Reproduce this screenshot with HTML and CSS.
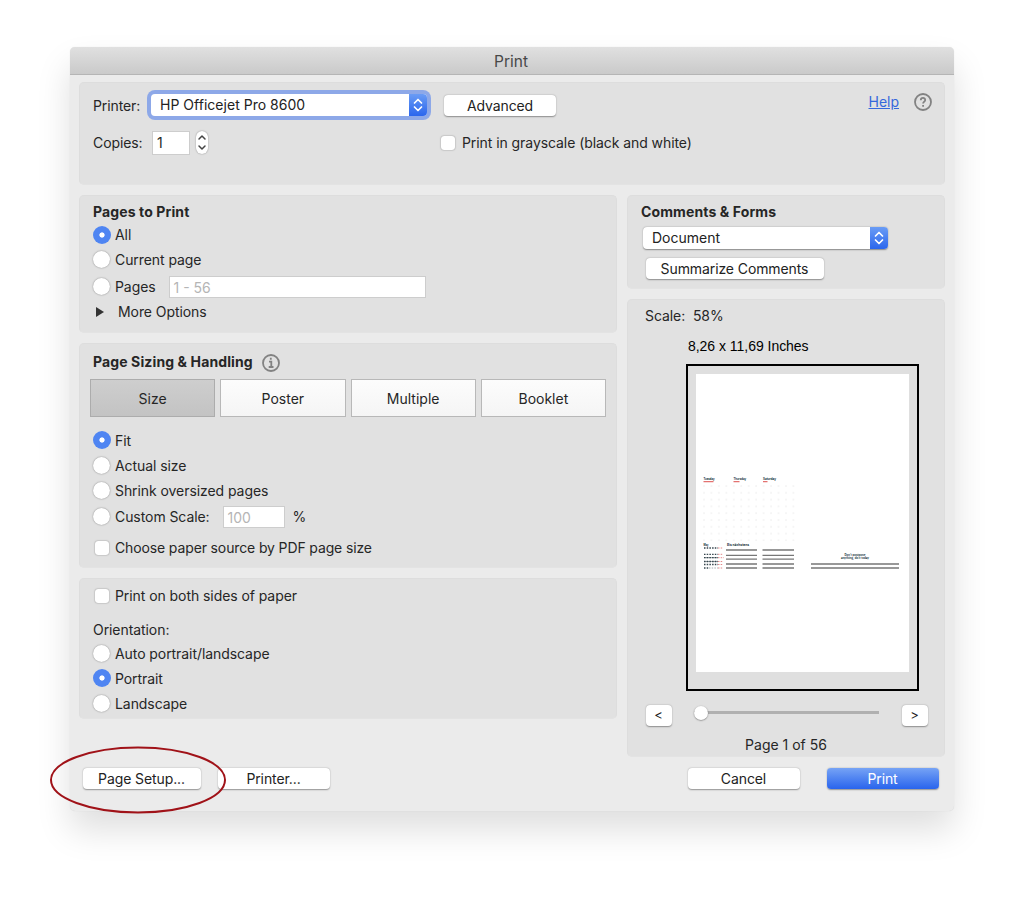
FILE: index.html
```html
<!DOCTYPE html>
<html lang="en">
<head>
<meta charset="utf-8">
<title>Print</title>
<link rel="stylesheet" href="styles.css">
</head>
<body>
<main class="window">
  <header class="titlebar">Print</header>
  <section class="panel printer-panel">
    <div class="row r30">
      <label class="lead first">Printer:</label>
      <div class="select focused"><span>HP Officejet Pro 8600</span><i class="arrows"><svg width="18" height="22" viewBox="0 0 18 22"><path d="M5.5 9 9 5.5 12.5 9M5.5 13 9 16.5 12.5 13"/></svg></i></div>
      <button class="btn advanced">Advanced</button>
      <a class="help">Help</a>
      <svg class="circle-icon" width="20" height="20" viewBox="0 0 20 20"><circle cx="10" cy="10" r="8"/><path d="M7.8 8.2C7.8 5.2 12.3 5.3 12.2 8c0 1.6-2.1 1.6-2.1 3.500M10.100 13v1.700"/></svg>
    </div>
    <div class="row r30 copies">
      <label class="lead">Copies:</label>
      <span class="field copies-field">1</span>
      <span class="stepper"><svg width="12" height="23" viewBox="0 0 12 23"><path d="M3 8 6 5 9 8M3 15 6 18 9 15"/></svg></span>
      <i class="check gray-check"></i><span class="t gray-text">Print in grayscale (black and white)</span>
    </div>
  </section>
  <div class="columns">
    <div class="left">
      <section class="panel pages-panel">
        <h2 class="row h-title"><span class="t">Pages to Print</span></h2>
        <div class="row r24"><i class="radio on"></i><span class="t">All</span></div>
        <div class="row r26"><i class="radio"></i><span class="t">Current page</span></div>
        <div class="row r27 pages-row"><i class="radio"></i><span class="t">Pages</span><span class="field pages-field">1 - 56</span></div>
        <div class="row r24"><svg class="tri" width="8" height="10" viewBox="0 0 8 10"><path d="M0 0 8 5 0 10z"/></svg><span class="t more">More Options</span></div>
      </section>
      <section class="panel sizing-panel">
        <h2 class="row h-title sizing-title"><span class="t">Page Sizing &amp; Handling</span><svg class="circle-icon info" width="20" height="20" viewBox="0 0 20 20"><circle cx="10" cy="10" r="8"/><path d="M8 8.700h2.300v5M7.700 14h4.800M9.800 4.800v1.900"/></svg></h2>
        <div class="tabs"><span class="tab active">Size</span><span class="tab">Poster</span><span class="tab">Multiple</span><span class="tab">Booklet</span></div>
        <div class="row r25 fit"><i class="radio on"></i><span class="t">Fit</span></div>
        <div class="row r25"><i class="radio"></i><span class="t">Actual size</span></div>
        <div class="row r25"><i class="radio"></i><span class="t">Shrink oversized pages</span></div>
        <div class="row r27"><i class="radio"></i><span class="t">Custom Scale:</span><span class="field scale-field">100</span><span class="t percent">%</span></div>
        <div class="row r24 source"><i class="check"></i><span class="t">Choose paper source by PDF page size</span></div>
      </section>
      <section class="panel orientation-panel">
        <div class="row r24"><i class="check"></i><span class="t">Print on both sides of paper</span></div>
        <div class="row r24 orientation"><span class="t">Orientation:</span></div>
        <div class="row r25"><i class="radio"></i><span class="t">Auto portrait/landscape</span></div>
        <div class="row r25"><i class="radio on"></i><span class="t">Portrait</span></div>
        <div class="row r25"><i class="radio"></i><span class="t">Landscape</span></div>
      </section>
      <div class="footer footer-left"><button class="btn setup">Page Setup...</button><button class="btn printer">Printer...</button></div>
    </div>
    <div class="right">
      <section class="panel comments-panel">
        <h2 class="row h-title"><span class="t">Comments &amp; Forms</span></h2>
        <div class="select doc"><span>Document</span><i class="arrows"><svg width="18" height="22" viewBox="0 0 18 22"><path d="M5.500 9 9 5.500 12.500 9M5.500 13 9 16.500 12.500 13"/></svg></i></div>
        <button class="btn summarize">Summarize Comments</button>
      </section>
      <section class="panel preview-panel">
        <div class="row r24 scale"><span class="t">Scale:&nbsp; 58%</span></div>
        <div class="dims"><span>8,26 x 11,69 Inches</span></div>
        <div class="sheet">
          <svg class="page" width="213" height="298" viewBox="696 374 213 298">
            <defs><pattern id="dots" x="703" y="485" width="7.450" height="6.800" patternUnits="userSpaceOnUse"><rect x=".5" y=".5" width="1" height="1" fill="#dcdcdc"/></pattern></defs>
            <rect x="703" y="485" width="92" height="56" fill="url(#dots)"/>
            <g class="tiny"><text x="703.500" y="479.700" textLength="11" lengthAdjust="spacingAndGlyphs">Tuesday</text><text x="733.500" y="479.700" textLength="12.500" lengthAdjust="spacingAndGlyphs">Thursday</text><text x="763" y="479.700" textLength="13" lengthAdjust="spacingAndGlyphs">Saturday</text><text x="703.500" y="546.200" textLength="5" lengthAdjust="spacingAndGlyphs">May</text><text x="727" y="546.200" textLength="22" lengthAdjust="spacingAndGlyphs">Bis nächstens</text><text class="note" x="844.500" y="556.200" textLength="21" lengthAdjust="spacingAndGlyphs">Don't postpone</text><text class="note" x="841" y="558.800" textLength="28" lengthAdjust="spacingAndGlyphs">anything, do it today</text></g>
            <path d="M703.500 481.700h10M733.500 481.700h6M763 481.700h4.500" stroke="#e47270" stroke-width="1.300"/>
            <g fill="none" stroke="#35454d" stroke-dasharray="1.500 1.200"><path d="M704 548h14M704 554.300h14M704 557.700h14M704 561.500h14M704 564.500h14M704 568h5" stroke-width="1.300"/><path d="M704 557.700h14M704 561.500h14" stroke-dasharray="none" opacity=".5"/><path d="M709 568h9" stroke="#a3abb0"/><path d="M718 548h5M718 554.300h5M718 557.700h6M718 561.500h5M718 564.500h5M718 568h5" stroke="#e3898a"/></g>
            <path d="M726 550h31M726 555.300h31M726 559.200h31M726 564h31M726 568h31M762.500 550h31.500M762.500 555.300h31.500M762.500 559.200h31.500M762.500 564h31.500M762.500 568h31.500M811 564h88M811 568h88" stroke="#777" stroke-width="1.300"/>
          </svg>
        </div>
        <div class="nav"><button class="btn step">&lt;</button><div class="slider"><i class="thumb"></i></div><button class="btn step">&gt;</button></div>
        <div class="page-count"><span>Page 1 of 56</span></div>
      </section>
      <div class="footer footer-right"><button class="btn cancel">Cancel</button><button class="btn primary">Print</button></div>
    </div>
  </div>
  <svg class="annotation" width="178" height="70" viewBox="0 0 178 70"><ellipse cx="89" cy="35" rx="87" ry="32.500"/></svg>
</main>
</body>
</html>
```
FILE: styles.css
```css
* { box-sizing: border-box; }
body { display: flow-root; margin: 0; height: 904px; overflow: hidden; background: #fff; color: #262626; font: 14px/20px Inter, "Liberation Sans", sans-serif; }
.window { position: relative; width: 884px; height: 764px; margin: 47px 0 0 70px; background: #ebebeb; border-radius: 5px; box-shadow: 0 0 1px rgba(0,0,0,.15), 0 19px 34px rgba(0,0,0,.13); }
.titlebar { height: 28px; border-radius: 5px 5px 0 0; border-bottom: 1px solid #b5b5b5; background: linear-gradient(#e0e0e0, #cacaca); color: #484848; font-size: 15.500px; line-height: 30px; text-align: center; margin-bottom: 7px; padding-right: 2px; }
.panel { background: #e1e1e1; border: 1px solid #dddddd; border-bottom-color: #e3e3e3; border-radius: 5px; }
.row { display: flex; align-items: center; white-space: nowrap; }
.t { letter-spacing: -.07px; }
.r24 { height: 24px; } .r25 { height: 25px; } .r26 { height: 26px; } .r27 { height: 27px; } .r30 { height: 30px; }
.printer-panel { width: 866px; height: 103px; margin: 0 0 10px 9px; padding: 7px 0 0 13px; }
.lead { width: 58px; flex: none; letter-spacing: -.1px; }
.first { padding-top: 2px; }
.copies { margin-top: 8px; }
.select { display: flex; justify-content: space-between; align-items: center; height: 21.500px; border-radius: 4px; background: #fff; padding-left: 9px; overflow: hidden; box-shadow: 0 .5px 1.500px rgba(0,0,0,.4); color: #222; }
.focused { width: 276px; box-shadow: 0 0 0 4px #8da8e8; flex: none; letter-spacing: .02px; }
.arrows { width: 18px; height: 22px; background: linear-gradient(#6a9cf5, #2b66ed); }
.arrows svg { display: block; fill: none; stroke: #fff; stroke-width: 1.700; stroke-linecap: round; stroke-linejoin: round; }
.btn { display: block; height: 21px; padding: 0; border: 0; border-radius: 4px; background: #fff; box-shadow: 0 .5px 1.500px rgba(0,0,0,.38); color: #222; font: 14px/21px Inter, sans-serif; letter-spacing: -.1px; text-align: center; white-space: nowrap; flex: none; }
.advanced { width: 112px; margin-left: 17px; }
.help { margin: -7px 15px 0 312.500px; color: #3568dc; text-decoration: underline; }
.circle-icon { fill: none; stroke: #828282; stroke-width: 1.800; margin-top: -6px; margin-left: -1px; flex: none; }
.field { height: 22px; border: 1px solid #cdcdcd; background: #fff; padding: 1px 0 0 4px; line-height: 20px; }
.copies-field { width: 38px; height: 24px; margin-left: 1px; }
.stepper { width: 12px; height: 23px; margin: -1px 0 0 6px; border-radius: 6px; background: #fff; box-shadow: 0 0 1.500px rgba(0,0,0,.45); }
.stepper svg { display: block; fill: none; stroke: #444; stroke-width: 1.500; stroke-linecap: round; stroke-linejoin: round; }
.check { width: 14px; height: 14px; margin: 0 6.500px 0 1.500px; border-radius: 3px; background: #fff; box-shadow: 0 0 1.500px rgba(0,0,0,.5); flex: none; }
.gray-check { margin: 0 7px 0 233px; }
.columns { display: flex; gap: 10px; margin-left: 9px; }
.left { width: 538px; } .right { width: 318px; }
.pages-panel { height: 138px; padding: 4px 0 0 13px; }
h2.row { margin: 0; height: 23px; font-size: 14px; font-weight: 700; }
h2.row .t { letter-spacing: .12px; }
.radio { width: 17px; height: 17px; margin: -1px 5px 0 0; border-radius: 50%; background: #fff; box-shadow: 0 0 1.500px rgba(0,0,0,.5); flex: none; }
.on { background: radial-gradient(circle, #fff 2.200px, #4f85f2 3px); box-shadow: none; width: 18px; height: 18px; margin: -1px 4.500px 0 -.5px; }
.pages-field { width: 257px; margin-left: 13px; color: #b5b5b5; }
.tri { fill: #333; margin-left: 3px; } .more { margin-left: 14px; }
.sizing-panel { height: 225px; margin: 10px 0; padding: 6px 0 0 13px; }
h2 .info { margin: 3px 0 0 8.500px; }
.tabs { display: flex; gap: 5px; width: 516px; margin: 6px 0 0 -3px; }
.tab { flex: 1; height: 38px; border: 1px solid #b8b8b8; background: linear-gradient(#fcfcfc, #f5f5f5); text-align: center; line-height: 37px; }
.tab.active { background: linear-gradient(#cecece, #c3c3c3); border-color: #acacac; }
.fit { margin-top: 11px; }
.scale-field { width: 62px; margin-left: 13px; color: #b5b5b5; }
.percent { margin-left: 8px; }
.source { margin-top: 6px; }
.source .t { letter-spacing: -.13px; }
.orientation-panel { height: 141px; padding: 5px 0 0 13px; }
.orientation { margin: 10px 0 -1px; }
.footer { display: flex; }
.footer-left { margin: 49px 0 0 3.500px; }
.setup { width: 118px; } .printer { width: 112px; margin-left: 17px; }
.comments-panel { height: 94px; padding: 4px 0 0 13px; }
.doc { width: 245px; margin: 4px 0 0 2px; }
.summarize { width: 178px; margin: 9.500px 0 0 4.500px; }
.preview-panel { height: 458px; margin-top: 10px; padding: 4px 0 0 17px; }
.dims { margin: 8px 0 0 43px; height: 20px; font: 14px/20px "Liberation Sans", sans-serif; letter-spacing: -.03px; color: #000; }
.sheet { width: 233px; height: 327px; margin: 8px 0 0 41px; padding: 8px; border: 2.500px solid #000; background: #dfdfdf; }
.page { display: block; background: #fff; }
.tiny { fill: #18343f; font: 700 3.500px Inter, sans-serif; }
.note { font-size: 2.800px; }
.nav { display: flex; margin: 13.500px 0 0 .5px; align-items: flex-start; }
.step { width: 26px; font-size: 13px; }
.slider { width: 186px; height: 14px; margin: 1px 22px 0; padding: 5.500px 0; background: linear-gradient(#b0b0b0,#b0b0b0) content-box; display: flex; align-items: center; }
.slider { padding-right: 1px; }
.thumb { width: 14px; height: 14px; border-radius: 50%; background: #fff; box-shadow: 0 .5px 1.500px rgba(0,0,0,.5); flex: none; }
.page-count { margin: 9px 17px 0 0; text-align: center; }
.footer-right { margin: 11px 0 0 60.500px; gap: 27px; }
.cancel, .primary { width: 112px; }
.primary { background: linear-gradient(#76a3f5, #2964ed); color: #fff; }
.annotation { position: absolute; left: -21px; top: 698px; fill: none; stroke: #a01218; stroke-width: 2; }
```
